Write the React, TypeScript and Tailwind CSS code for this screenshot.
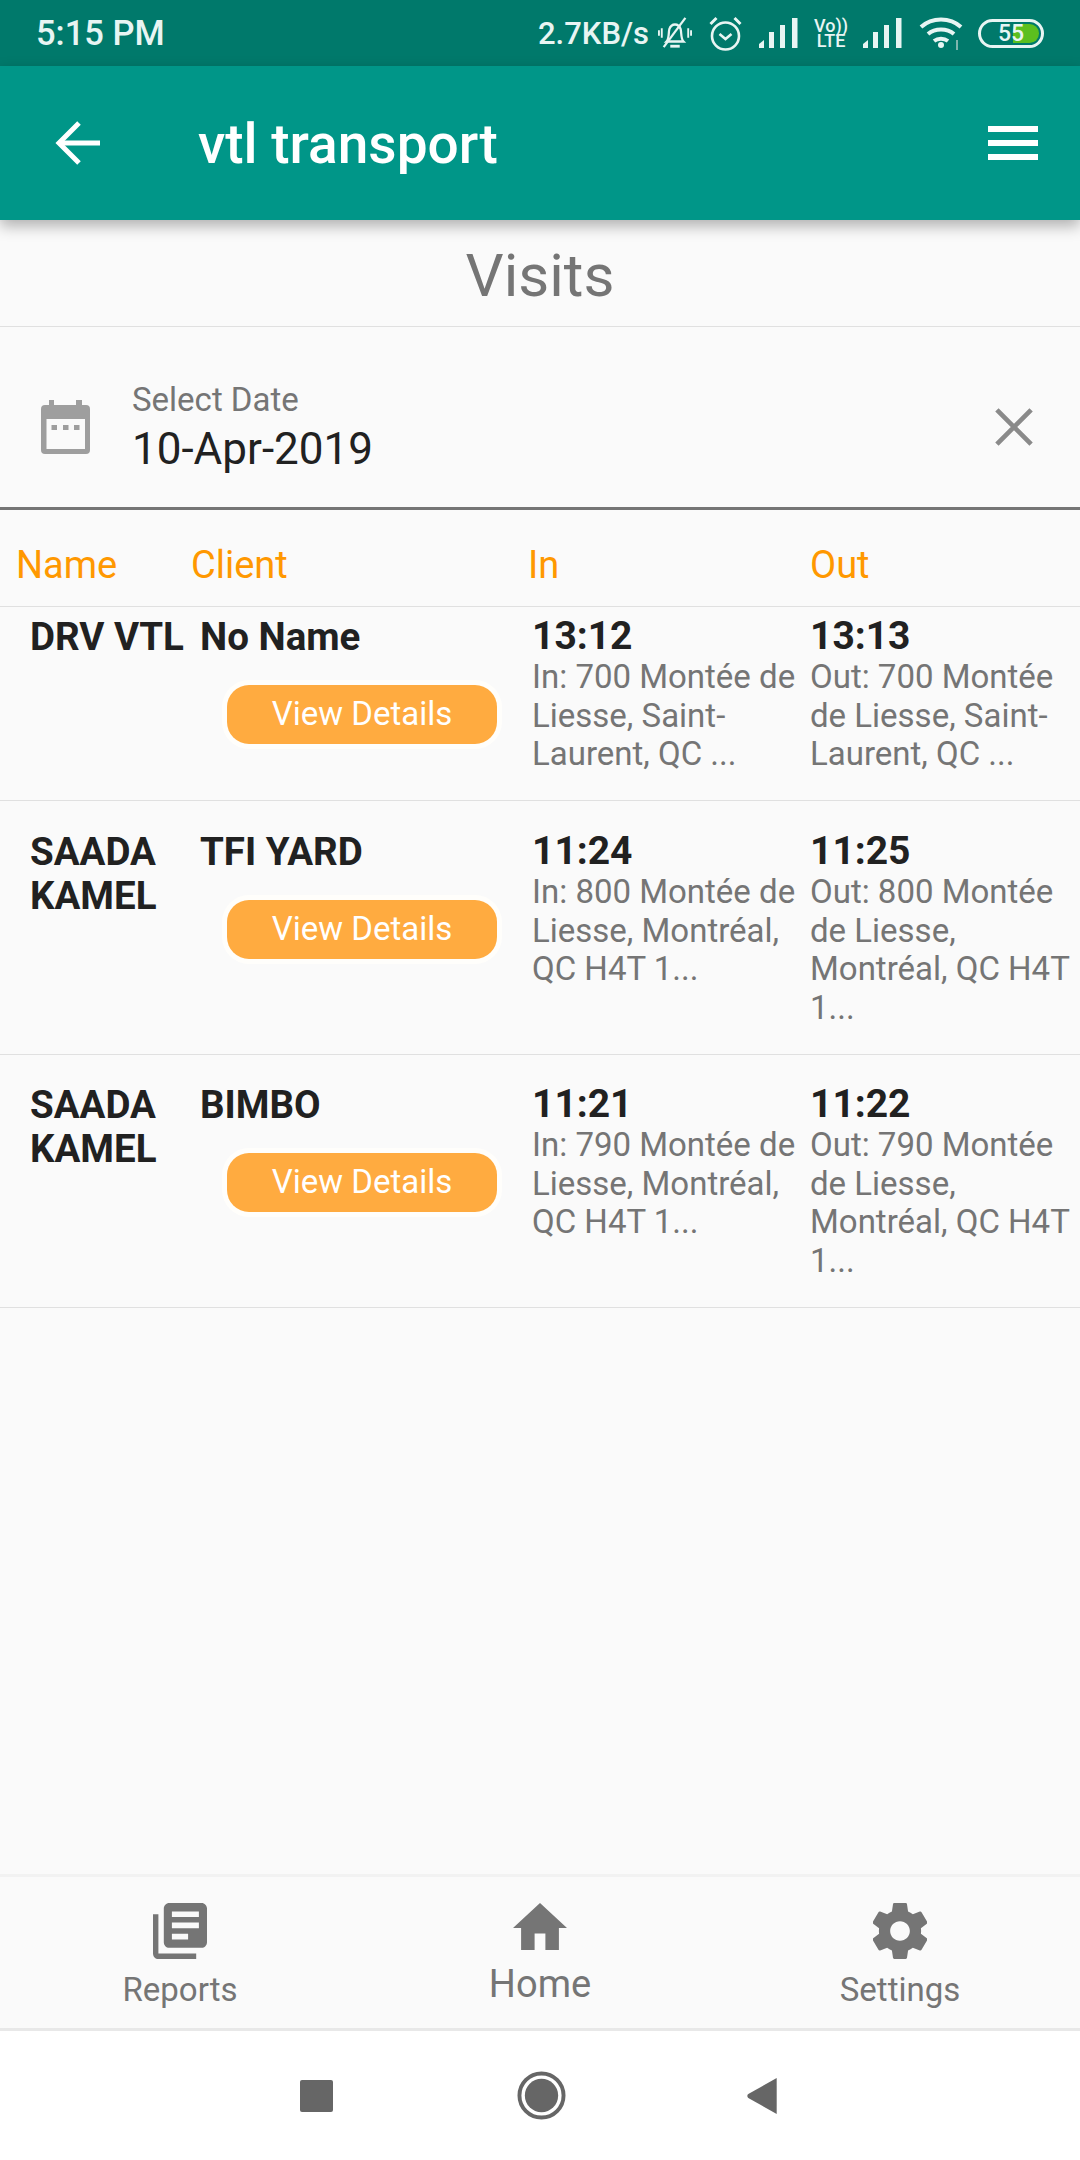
const font = { fontFamily: "Roboto, sans-serif" };

function Bars() {
  return (
    <svg width="40" height="30" viewBox="0 0 40 30" fill="#e8f5f3">
      <path d="M0 30v-4l5-4v8z" />
      <rect x="10" y="14" width="5" height="16" />
      <rect x="21" y="7" width="5" height="23" />
      <rect x="33" y="0" width="5.5" height="30" />
    </svg>
  );
}

function StatusBar() {
  return (
    <div className="h-[66px] bg-[#00796b] flex items-center justify-between pl-[36px] pr-[36px] text-[#e8f5f3]">
      <span className="text-[34.5px] font-medium leading-none">5:15 PM</span>
      <div className="flex items-center">
        <span className="text-[31px] font-medium leading-none">2.7KB/s</span>
        <svg className="ml-[9px]" width="34" height="34" viewBox="0 0 36 36" fill="none" stroke="#e8f5f3" strokeWidth="2.4">
          <path d="M9 27c3-3 2-9 3-13 1-3 3-5 6-5s5 2 6 5c1 4 0 10 3 13z" />
          <path d="M13 32h10" strokeWidth="3" />
          <path d="M6 33 29 2" />
          <path d="M4 13v10M1 15v6M32 13v10M35 15v6" strokeWidth="2" />
        </svg>
        <svg className="ml-[16px]" width="35" height="36" viewBox="0 0 34 36" fill="none" stroke="#e8f5f3" strokeWidth="2.6">
          <circle cx="17" cy="21" r="13.5" />
          <path d="M11 19l6 5 6-5" />
          <path d="M2 9l6-6M32 9l-6-6" strokeWidth="3" />
        </svg>
        <div className="ml-[16px]"><Bars /></div>
        <div className="ml-[16px] w-[32px] flex flex-col items-center text-[18px] font-medium leading-[15px] whitespace-nowrap">
          <span>Vo))</span>
          <span>LTE</span>
        </div>
        <div className="ml-[16px]"><Bars /></div>
        <svg className="ml-[16px]" width="44" height="34" viewBox="0 0 44 34" fill="none" stroke="#e8f5f3" strokeWidth="4">
          <path d="M2 11c11-10 29-10 40 0" />
          <path d="M9 18c7-6 19-6 26 0" />
          <path d="M15 25c4-3 10-3 14 0" />
          <circle cx="22" cy="29" r="3" fill="#e8f5f3" stroke="none" />
          <path d="M38 24v10" stroke="#7fb5ad" strokeWidth="2" />
        </svg>
        <div className="ml-[15px] relative w-[66px] h-[29px] rounded-full border-[3px] border-[#e8f5f3] flex items-center justify-center">
          <div className="absolute right-[2px] top-[2px] bottom-[2px] w-[26px] rounded-r-full bg-[#5cbf1f]" />
          <span className="relative text-[23px] font-medium leading-none">55</span>
        </div>
      </div>
    </div>
  );
}

function Header() {
  return (
    <div className="relative z-10 h-[154px] bg-[#009688] flex items-center justify-between pl-[55px] pr-[42px] shadow-[0_6px_14px_rgba(0,0,0,0.3)] text-white">
      <div className="flex items-center">
        <svg width="45" height="44" viewBox="0 0 45 44" fill="none" stroke="white" strokeWidth="5">
          <path d="M45 22H5" />
          <path d="M24 2 4 22l20 20" />
        </svg>
        <span className="ml-[98px] mt-[2px] text-[55px] font-medium leading-none">vtl transport</span>
      </div>
      <div className="flex flex-col gap-[8px] w-[50px]">
        <div className="h-[6px] bg-white" />
        <div className="h-[6px] bg-white" />
        <div className="h-[6px] bg-white" />
      </div>
    </div>
  );
}

function DateRow() {
  return (
    <div className="h-[183px] flex items-center justify-between border-b-[3px] border-[#757575] pt-[20px] pl-[41px] pr-[47px]">
      <div className="flex items-center">
        <svg width="49" height="54" viewBox="0 0 49 54" fill="#9e9e9e">
          <path d="M8 0h5v5h22V0h6v5h4a4 4 0 0 1 4 4v41a4 4 0 0 1-4 4H4a4 4 0 0 1-4-4V9a4 4 0 0 1 4-4h4z" />
          <rect x="5.5" y="19" width="38.5" height="30" fill="#fafafa" />
          <rect x="10.5" y="25" width="5.5" height="5" />
          <rect x="22" y="25" width="5.5" height="5" />
          <rect x="33" y="25" width="5.5" height="5" />
        </svg>
        <div className="ml-[42px] mt-[6px]">
          <div className="text-[33px] leading-[38px] text-[#757575]">Select Date</div>
          <div className="text-[44px] leading-[60px] text-[#212121]">10-Apr-2019</div>
        </div>
      </div>
      <svg width="38" height="38" viewBox="0 0 40 40" stroke="#8a8a8a" strokeWidth="5" fill="none">
        <path d="M2 2l36 36M38 2 2 38" />
      </svg>
    </div>
  );
}

type Visit = {
  name: string[];
  client: string;
  tin: string;
  tout: string;
  ain: string[];
  aout: string[];
  pt: string;
  h: string;
};

const visits: Visit[] = [
  {
    name: ["DRV VTL"],
    client: "No Name",
    tin: "13:12",
    tout: "13:13",
    ain: ["In: 700 Montée de", "Liesse, Saint-", "Laurent, QC ..."],
    aout: ["Out: 700 Montée", "de Liesse, Saint-", "Laurent, QC ..."],
    pt: "pt-[8px]",
    h: "h-[194px]",
  },
  {
    name: ["SAADA", "KAMEL"],
    client: "TFI YARD",
    tin: "11:24",
    tout: "11:25",
    ain: ["In: 800 Montée de", "Liesse, Montréal,", "QC H4T 1..."],
    aout: ["Out: 800 Montée", "de Liesse,", "Montréal, QC H4T", "1..."],
    pt: "pt-[29px]",
    h: "h-[254px]",
  },
  {
    name: ["SAADA", "KAMEL"],
    client: "BIMBO",
    tin: "11:21",
    tout: "11:22",
    ain: ["In: 790 Montée de", "Liesse, Montréal,", "QC H4T 1..."],
    aout: ["Out: 790 Montée", "de Liesse,", "Montréal, QC H4T", "1..."],
    pt: "pt-[28px]",
    h: "h-[253px]",
  },
];

function Row({ v }: { v: Visit }) {
  return (
    <div className={`flex border-b-[1.5px] border-[#e0e0e0] pl-[30px] ${v.pt} ${v.h}`}>
      <div className="w-[170px] text-[38.5px] font-bold leading-[44px] text-[#212121] whitespace-nowrap">
        {v.name.map((n) => (
          <div key={n}>{n}</div>
        ))}
      </div>
      <div className="w-[333px]">
        <div className="text-[38.5px] font-bold leading-[44px] text-[#212121]">{v.client}</div>
        <div className="mt-[26px] ml-[27px] w-[270px] h-[59px] rounded-[22px] bg-[#ffab40] shadow-[0_0_0_5px_#fffefb] flex items-center justify-center pb-[2px] text-[33px] text-white">
          View Details
        </div>
      </div>
      <div className="w-[278px] -ml-[1px]">
        <div className="text-[39px] font-bold leading-[43px] text-[#212121]">{v.tin}</div>
        {v.ain.map((a) => (
          <div key={a} className="text-[33px] leading-[38.5px] text-[#757575] whitespace-nowrap">{a}</div>
        ))}
      </div>
      <div>
        <div className="text-[39px] font-bold leading-[43px] text-[#212121]">{v.tout}</div>
        {v.aout.map((a) => (
          <div key={a} className="text-[33px] leading-[38.5px] text-[#757575] whitespace-nowrap">{a}</div>
        ))}
      </div>
    </div>
  );
}

function BottomNav() {
  return (
    <div className="h-[157px] bg-[#fafafa] border-t-[3px] border-t-[#f2f2f2] border-b-[3px] border-b-[#e8e8e8] flex items-start pt-[26px]">
      <div className="flex-1 flex flex-col items-center">
        <svg width="54" height="56" viewBox="2 2 20 20" preserveAspectRatio="none" fill="#757575">
          <path d="M4 6H2v14c0 1.1.9 2 2 2h14v-2H4V6zm16-4H8c-1.1 0-2 .9-2 2v12c0 1.1.9 2 2 2h12c1.1 0 2-.9 2-2V4c0-1.1-.9-2-2-2zm-1 9H9V9h10v2zm-4 4H9v-2h6v2zm4-8H9V5h10v2z" />
        </svg>
        <span className="mt-[9px] text-[33px] leading-[44px] text-[#757575]">Reports</span>
      </div>
      <div className="flex-1 flex flex-col items-center">
        <svg width="54" height="47" viewBox="2 3 20 17" preserveAspectRatio="none" fill="#757575">
          <path d="M10 20v-6h4v6h5v-8h3L12 3 2 12h3v8z" />
        </svg>
        <span className="mt-[9px] text-[38px] leading-[50px] text-[#757575]">Home</span>
      </div>
      <div className="flex-1 flex flex-col items-center">
        <svg width="54" height="56" viewBox="2.4 2 19.2 20" preserveAspectRatio="none" fill="#757575">
          <path d="M19.43 12.98c.04-.32.07-.64.07-.98s-.03-.66-.07-.98l2.11-1.65c.19-.15.24-.42.12-.64l-2-3.46c-.12-.22-.39-.3-.61-.22l-2.49 1c-.52-.4-1.08-.73-1.69-.98l-.38-2.65C14.46 2.18 14.25 2 14 2h-4c-.25 0-.46.18-.49.42l-.38 2.65c-.61.25-1.17.59-1.69.98l-2.49-1c-.23-.09-.49 0-.61.22l-2 3.46c-.13.22-.07.49.12.64l2.11 1.65c-.04.32-.07.65-.07.98s.03.66.07.98l-2.11 1.65c-.19.15-.24.42-.12.64l2 3.46c.12.22.39.3.61.22l2.49-1c.52.4 1.08.73 1.69.98l.38 2.65c.03.24.24.42.49.42h4c.25 0 .46-.18.49-.42l.38-2.65c.61-.25 1.17-.59 1.69-.98l2.49 1c.23.09.49 0 .61-.22l2-3.46c.12-.22.07-.49-.12-.64l-2.11-1.65zM12 15.5c-1.93 0-3.5-1.57-3.5-3.5s1.57-3.5 3.5-3.5 3.5 1.57 3.5 3.5-1.57 3.5-3.5 3.5z" />
        </svg>
        <span className="mt-[9px] text-[33px] leading-[44px] text-[#757575]">Settings</span>
      </div>
    </div>
  );
}

function SystemNav() {
  return (
    <div className="h-[129px] bg-white flex items-center justify-center pr-[3px]">
      <div className="w-[33px] h-[32px] rounded-[2px] bg-[#666666]" />
      <svg className="ml-[184px]" width="49" height="49" viewBox="0 0 50 50">
        <circle cx="25" cy="25" r="22.5" fill="none" stroke="#666666" strokeWidth="4" />
        <circle cx="25" cy="25" r="17" fill="#666666" />
      </svg>
      <svg className="ml-[181px]" width="31" height="36" viewBox="0 0 32 38" fill="#666666">
        <path d="M31 0v38L1 21a2.5 2.5 0 0 1 0-4z" />
      </svg>
    </div>
  );
}

export default function App() {
  return (
    <div className="w-[1080px] h-[2160px] flex flex-col bg-[#fafafa] overflow-hidden" style={font}>
      <StatusBar />
      <Header />
      <div className="h-[107px] pt-[5px] border-b-[1.5px] border-[#e0e0e0] flex items-center justify-center text-[60px] leading-none text-[#757575]">
        Visits
      </div>
      <DateRow />
      <div className="h-[97px] pt-[15px] flex items-center border-b-[1.5px] border-[#e0e0e0] text-[38px] text-[#ff9800]">
        <span className="ml-[16px] w-[175px]">Name</span>
        <span className="w-[337px]">Client</span>
        <span className="w-[282px]">In</span>
        <span>Out</span>
      </div>
      {visits.map((v) => (
        <Row key={v.tin} v={v} />
      ))}
      <div className="flex-1" />
      <BottomNav />
      <SystemNav />
    </div>
  );
}
